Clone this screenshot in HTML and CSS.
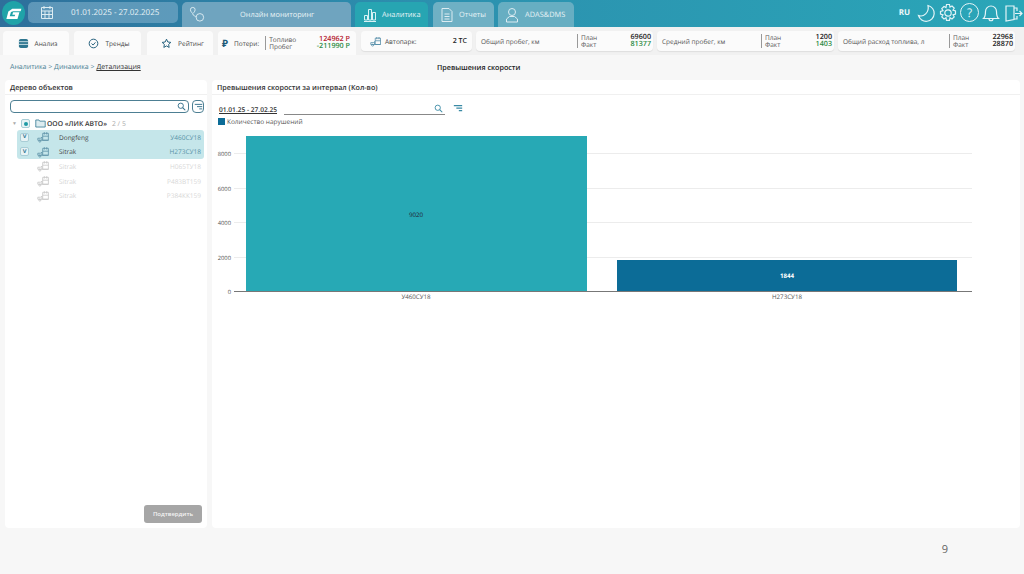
FILE: index.html
```html
<!DOCTYPE html>
<html lang="ru">
<head>
<meta charset="utf-8">
<title>Превышения скорости</title>
<link rel="stylesheet" href="styles.css">
</head>
<body>
<svg class="sprite" width="0" height="0">
  <defs>
    <symbol id="truck" viewBox="0 0 16 14"><path d="M7 2.500h7v8.500H7zM9 1v3M12 1v3M7 6h7M1 11V8.500h3.500L6 7v4M1 11h13" fill="none" stroke="currentColor" stroke-width="1"/><circle cx="3.500" cy="12" r="1.300" fill="none" stroke="currentColor"/></symbol>
  </defs>
</svg>
<header class="topbar">
  <div class="logo"><svg viewBox="0 0 24 24" width="19" height="19"><path d="M22 6H10.500L5.500 9.500 3 19h14l2.500-8.500h-8l-1 3h3.600l-.6 2H7.200l1.600-5.500L11.500 9H21z" fill="#fff"/></svg></div>
  <div class="tab tab-date">
    <svg class="tab-icon" viewBox="0 0 16 16" width="16" height="16"><path d="M2.500 2.500h11v11h-11zM2.500 6h11M2.500 9.500h11M6 6v7.500M10 6v7.500M5 1v3M11 1v3" fill="none" stroke="#dcecf2" stroke-width="1"/></svg>
    <span class="tab-date-text">01.01.2025 - 27.02.2025</span>
  </div>
  <div class="tab tab-mon">
    <svg class="tab-icon" viewBox="0 0 18 18" width="17" height="17"><path d="M4 1.500a2.500 2.500 0 0 1 2.500 2.500C6.500 6 4 8 4 8S1.500 6 1.500 4A2.500 2.500 0 0 1 4 1.500zM4 8c0 3 3 2 4 4" fill="none" stroke="#dcecf2"/><circle cx="11.500" cy="12" r="4" fill="none" stroke="#dcecf2"/></svg>
    <span class="tab-mon-text">Онлайн мониторинг</span>
  </div>
  <div class="tab tab-an">
    <svg viewBox="0 0 16 16" width="16" height="16"><path d="M2 14.500h12M2.500 13V8.500h3V13zM6.500 13V2.500h3V13zM10.500 13V5.500h3V13z" fill="none" stroke="#d8f2f5"/></svg>
    <span>Аналитика</span>
  </div>
  <div class="tab tab-rep">
    <svg viewBox="0 0 16 16" width="16" height="16"><path d="M3 1.500h7l3 3v10H3zM5.500 7h5M5.500 9.500h5M5.500 12h5" fill="none" stroke="#dcecf2"/></svg>
    <span>Отчеты</span>
  </div>
  <div class="tab tab-ad">
    <svg viewBox="0 0 16 16" width="16" height="16"><circle cx="8" cy="5" r="3.500" fill="none" stroke="#dcecf2"/><path d="M2.500 15v-3l3-2.500h5l3 2.500v3z" fill="none" stroke="#dcecf2"/></svg>
    <span>ADAS&amp;DMS</span>
  </div>
  <div class="top-right">
    <span class="lang">RU</span>
    <svg viewBox="0 0 20 20" width="20" height="20"><path d="M12 2.500a8 8 0 1 1-9.500 10c5 2 11-3 9.500-10z" fill="none" stroke="#e4f4f7" stroke-width="1.200"/></svg>
    <svg viewBox="0 0 20 20" width="20" height="20"><circle cx="10" cy="10" r="3.200" fill="none" stroke="#e4f4f7" stroke-width="1.200"/><path d="M8.500 1.500h3l.5 2.500 2-1 2.200 2.200-1.200 2 2.500.7v3.200l-2.500.7 1.200 2-2.200 2.200-2-1.200-.5 2.500h-3l-.5-2.500-2 1.200-2.200-2.200 1.200-2-2.500-.7V8.400l2.500-.7-1.200-2L6 3.500l2 1z" fill="none" stroke="#e4f4f7" stroke-width="1.200"/></svg>
    <span class="help">?</span>
    <svg viewBox="0 0 20 20" width="20" height="20"><path d="M2.500 15.500c2-2 2-4 2-7a5.500 5.500 0 0 1 11 0c0 3 0 5 2 7zM8 15.500c0 3 4 3 4 0" fill="none" stroke="#e4f4f7" stroke-width="1.200"/></svg>
    <svg viewBox="0 0 20 20" width="20" height="20"><path d="M11 3H3v15l8-1.500zM11 5h3v3M14 13v3h-3M12 10.500h7M16.500 8l2.500 2.500-2.500 2.500" fill="none" stroke="#e4f4f7" stroke-width="1.200"/></svg>
  </div>
</header>

<nav class="subbar">
  <div class="sub-tab sub-a">
    <svg viewBox="0 0 12 12" width="11" height="11"><rect x="1" y="1" width="10" height="10" rx="2" fill="#2f7690"/><path d="M1 4h10M1 7h10" stroke="#cfe2e8"/></svg>
    <span>Анализ</span>
  </div>
  <div class="sub-tab sub-t">
    <svg viewBox="0 0 14 14" width="11" height="11"><circle cx="7" cy="7" r="5.500" fill="none" stroke="#1d5a78" stroke-width="1.200"/><path d="M4.500 7l2 2 3-3.500" fill="none" stroke="#1d5a78" stroke-width="1.200"/></svg>
    <span>Тренды</span>
  </div>
  <div class="sub-tab sub-r">
    <svg viewBox="0 0 14 14" width="11" height="11"><path d="M7 1.500l1.700 3.600 3.800.5-2.800 2.600.7 3.800L7 10.100 3.600 12l.7-3.800L1.500 5.600l3.800-.5z" fill="none" stroke="#1d5a78" stroke-width="1.200"/></svg>
    <span>Рейтинг</span>
  </div>
  <div class="stat stat-loss">
    <span class="ruble">₽</span>
    <span class="stat-name">Потери:</span>
    <div class="labels"><span>Топливо</span><span>Пробег</span></div>
    <div class="vals"><span class="red">124962 Р</span><span class="green">-211990 Р</span></div>
  </div>
  <div class="stat stat-park">
    <svg viewBox="0 0 16 14" width="12" height="11" class="park-icon"><use href="#truck"/></svg>
    <span class="stat-name">Автопарк:</span>
    <b class="park-val">2 ТС</b>
  </div>
  <div class="stat stat-plan plan-a">
    <span class="plan-name">Общий пробег, км</span>
    <div class="labels"><span>План</span><span>Факт</span></div>
    <div class="vals"><span>69600</span><span class="green">81377</span></div>
  </div>
  <div class="stat stat-plan plan-b">
    <span class="plan-name">Средний пробег, км</span>
    <div class="labels"><span>План</span><span>Факт</span></div>
    <div class="vals"><span>1200</span><span class="green">1403</span></div>
  </div>
  <div class="stat stat-plan plan-c">
    <span class="plan-name">Общий расход топлива, л</span>
    <div class="labels"><span>План</span><span>Факт</span></div>
    <div class="vals"><span>22968</span><span>28870</span></div>
  </div>
</nav>

<div class="crumbs">
  <div class="crumb-links">Аналитика &gt; Динамика &gt; <u>Детализация</u></div>
  <div class="crumb-title">Превышения скорости</div>
</div>

<main class="content">
  <section class="panel panel-left">
    <h2 class="panel-title">Дерево объектов</h2>
    <div class="search-row">
      <div class="search-box">
        <svg viewBox="0 0 12 12" width="9" height="9"><circle cx="5" cy="5" r="3.500" fill="none" stroke="#2b6a86" stroke-width="1.200"/><path d="M7.500 7.500L11 11" stroke="#2b6a86" stroke-width="1.400"/></svg>
      </div>
      <div class="filter-btn"><svg viewBox="0 0 12 10" width="9" height="8"><path d="M1 1.500h10M4 4.500h7M7 7.500h4" stroke="#2b6a86" stroke-width="1.200"/></svg></div>
    </div>
    <div class="tree-root">
      <span class="caret">▼</span>
      <span class="check check-dot"></span>
      <svg viewBox="0 0 14 11" width="11" height="9"><path d="M1 10V1h4l1 1.500h7V10z" fill="#dcecf0" stroke="#2f7690"/></svg>
      <b>ООО «ЛИК АВТО»</b>
      <span class="count">2 / 5</span>
    </div>
    <div class="rows">
      <div class="row row-on"><span class="check">v</span><svg class="truck" width="13" height="12"><use href="#truck"/></svg><span class="row-name">Dongfeng</span><span class="row-num">У460СУ18</span></div>
      <div class="row row-on"><span class="check">v</span><svg class="truck" width="13" height="12"><use href="#truck"/></svg><span class="row-name">Sitrak</span><span class="row-num">Н273СУ18</span></div>
      <div class="row row-off"><span class="check-empty"></span><svg class="truck" width="13" height="12"><use href="#truck"/></svg><span class="row-name">Sitrak</span><span class="row-num">Н065ТУ18</span></div>
      <div class="row row-off"><span class="check-empty"></span><svg class="truck" width="13" height="12"><use href="#truck"/></svg><span class="row-name">Sitrak</span><span class="row-num">Р483ВТ159</span></div>
      <div class="row row-off"><span class="check-empty"></span><svg class="truck" width="13" height="12"><use href="#truck"/></svg><span class="row-name">Sitrak</span><span class="row-num">Р384КК159</span></div>
    </div>
    <div class="confirm-row"><button class="confirm">Подтвердить</button></div>
  </section>

  <section class="panel panel-right">
    <h2 class="panel-title">Превышения скорости за интервал (Кол-во)</h2>
    <div class="chart-tools">
      <span class="range">01.01.25 - 27.02.25</span>
      <div class="range-search"><svg viewBox="0 0 12 12" width="9" height="9"><circle cx="5" cy="5" r="3.500" fill="none" stroke="#3a8aa5" stroke-width="1.200"/><path d="M7.500 7.500L11 11" stroke="#3a8aa5" stroke-width="1.400"/></svg></div>
      <svg class="range-filter" viewBox="0 0 12 10" width="10" height="9"><path d="M1 1.500h10M4 4.500h7M7 7.500h4" stroke="#3a8aa5" stroke-width="1.300"/></svg>
    </div>
    <div class="legend"><i></i><span>Количество нарушений</span></div>
    <svg class="chart" width="808" height="192" viewBox="212 126 808 192">
      <g stroke="#ececec">
        <line x1="234" x2="972" y1="153.500" y2="153.500"/>
        <line x1="234" x2="972" y1="188.500" y2="188.500"/>
        <line x1="234" x2="972" y1="222.500" y2="222.500"/>
        <line x1="234" x2="972" y1="257.500" y2="257.500"/>
      </g>
      <rect x="246" y="136" width="341" height="155" fill="#27a9b5"/>
      <rect x="617" y="260" width="340" height="31" fill="#0c6c97"/>
      <line x1="234" x2="972" y1="291.500" y2="291.500" stroke="#777"/>
      <g class="axis-y">
        <text x="231" y="155.500">8000</text>
        <text x="231" y="190.500">6000</text>
        <text x="231" y="224.500">4000</text>
        <text x="231" y="259.500">2000</text>
        <text x="231" y="294">0</text>
      </g>
      <g class="axis-x">
        <text x="416" y="299">У460СУ18</text>
        <text x="787" y="299">Н273СУ18</text>
      </g>
      <text class="bar-dark" x="416" y="217">9020</text>
      <text class="bar-light" x="787" y="278">1844</text>
    </svg>
  </section>
</main>

<footer class="footer"><span class="page-num">9</span></footer>
</body>
</html>
```
FILE: styles.css
```css
* { box-sizing: border-box; }
html, body { margin: 0; padding: 0; }
body {
  width: 1024px;
  height: 574px;
  overflow: hidden;
  background: #f7f7f7;
  font-family: "Open Sans", "Noto Sans", sans-serif;
  text-rendering: geometricPrecision;
  color: #333;
  font-size: 6.500px;
}
.sprite { position: absolute; }

.topbar {
  height: 27px;
  display: flex;
  align-items: flex-start;
  background: linear-gradient(90deg, #2e6f9b 0%, #2c8fae 40%, #2aa6b8 100%);
  padding-left: 2px;
  color: #e8f3f6;
  font-size: 7.400px;
}
.logo {
  width: 23px;
  height: 24px;
  margin-top: 1px;
  border-radius: 50%;
  background: #1fa3a8;
  display: flex;
  align-items: center;
  justify-content: center;
}
.tab {
  height: 25px;
  margin-top: 2px;
  border-radius: 5px 5px 0 0;
  background: rgba(170, 205, 222, 0.5);
  display: flex;
  align-items: center;
  gap: 5px;
}
.tab-date {
  width: 150px;
  height: 21px;
  margin-left: 3px;
  border-radius: 5px;
  padding-left: 11px;
  background: rgba(120, 170, 200, 0.65);
  font-size: 8px;
}
.tab-date-text { margin-left: 11px; }
.tab-mon { width: 169px; margin-left: 4px; padding-left: 7px; background: #6fa4bf; }
.tab-mon-text { margin-left: 29px; }
.tab-an { width: 73px; margin-left: 4px; padding-left: 7px; background: #27a5b2; gap: 4px; }
.tab-rep { width: 61px; margin-left: 5px; padding-left: 6px; background: #6fb0c4; gap: 4px; }
.tab-ad { width: 76px; margin-left: 4px; padding-left: 6px; background: #67aec2; gap: 5px; }
.top-right {
  margin-left: auto;
  padding-right: 1px;
  padding-top: 3px;
  height: 27px;
  display: flex;
  align-items: flex-start;
  gap: 2px;
}
.lang { font-weight: 700; font-size: 8px; margin-top: 4px; margin-right: 4px; color: #f0f8fa; }
.help {
  width: 19px;
  height: 19px;
  border: 1.200px solid #e4f4f7;
  border-radius: 50%;
  display: flex;
  align-items: center;
  justify-content: center;
  font-size: 12px;
  line-height: 1;
  color: #e4f4f7;
}

.subbar {
  height: 28px;
  display: flex;
  align-items: flex-start;
  padding: 4px 0 0 3px;
  background: #f1f1f1;
  color: #444;
}
.sub-tab {
  height: 24px;
  background: #fbfbfb;
  border-radius: 4px 4px 0 0;
  display: flex;
  align-items: center;
  justify-content: center;
  gap: 6px;
  padding-left: 3px;
}
.sub-a { width: 66px; }
.sub-t { width: 67px; margin-left: 5px; }
.sub-r { width: 66px; margin-left: 6px; padding-left: 5px; }
.stat {
  height: 20px;
  background: #fbfbfb;
  border-radius: 4px;
  display: flex;
  align-items: center;
  box-shadow: 0 1px 1px rgba(0, 0, 0, 0.08);
}
.stat-loss { width: 138px; margin-left: 5px; height: 24px; border-radius: 4px 4px 0 0; padding: 0 6px 0 4px; box-shadow: none; }
.stat-park { width: 111px; margin-left: 5px; padding: 0 5px 0 9px; }
.stat-plan { width: 177px; margin-left: 4px; padding: 0 2px 0 5px; }
.ruble { font-size: 10px; font-weight: 700; color: #1d5a78; margin-right: 6px; }
.park-icon { color: #4f8aa5; margin-right: 3px; }
.park-val { margin-left: auto; font-weight: 600; font-size: 7px; color: #222; }
.plan-name { color: #555; white-space: nowrap; }
.plan-a .plan-name { width: 96px; }
.plan-b .plan-name { width: 99px; }
.plan-c .plan-name { width: 106px; }
.labels {
  border-left: 1px solid #999;
  padding-left: 3px;
  display: flex;
  flex-direction: column;
  line-height: 7px;
  color: #555;
}
.stat-loss .labels { margin-left: 6px; }
.vals {
  margin-left: auto;
  display: flex;
  flex-direction: column;
  align-items: flex-end;
  font-size: 7.200px;
  font-weight: 600;
  line-height: 7.500px;
  color: #222;
}
.red { color: #b5202f; }
.green { color: #2e8b46; }

.crumbs {
  height: 25px;
  display: flex;
  align-items: center;
  padding: 0 0 0 10px;
  color: #4a7f95;
  font-size: 7px;
}
.crumb-links { width: 427px; white-space: nowrap; }
.crumb-links u { color: #333; }
.crumb-title {
  font-size: 7.200px;
  font-weight: 600;
  color: #222;
}

.content {
  height: 448px;
  display: flex;
  gap: 5px;
  padding: 0 4px 0 5px;
}
.panel {
  background: #fff;
  border-radius: 4px;
  display: flex;
  flex-direction: column;
}
.panel-left { width: 202px; }
.panel-right { flex: 1; }
.panel-title {
  margin: 0;
  height: 15px;
  padding: 2px 0 0 5px;
  font-size: 7.200px;
  line-height: 13px;
  font-weight: 600;
  color: #333;
  border-bottom: 1px solid #f0f0f0;
}
.search-row {
  display: flex;
  gap: 3px;
  padding: 5px 3px 0 5px;
}
.search-box {
  flex: 1;
  height: 13px;
  border: 1px solid #4d7f93;
  border-radius: 4px;
  display: flex;
  align-items: center;
  justify-content: flex-end;
  padding-right: 2px;
}
.filter-btn {
  width: 12px;
  height: 13px;
  border: 1px solid #4d7f93;
  border-radius: 4px;
  display: flex;
  align-items: center;
  justify-content: center;
}
.tree-root {
  display: flex;
  align-items: center;
  height: 15px;
  margin-top: 3px;
  padding-left: 7px;
  font-size: 6.800px;
  color: #333;
}
.tree-root b { font-weight: 600; margin-left: 1px; }
.caret { font-size: 5px; color: #aaa; width: 9px; }
.check {
  width: 9px;
  height: 9px;
  border: 1px solid #a8cdd6;
  border-radius: 2px;
  background: #e7f3f5;
  color: #1d6f8f;
  font-size: 7px;
  line-height: 6px;
  display: flex;
  align-items: center;
  justify-content: center;
  font-weight: 600;
}
.check-dot { margin-right: 5px; }
.check-dot::after {
  content: "";
  width: 4px;
  height: 4px;
  border-radius: 50%;
  background: #1f9aa5;
}
.count { margin-left: 5px; color: #aaa; }
.rows { margin: -1px 3px 0 12px; }
.row {
  height: 14.600px;
  display: flex;
  align-items: center;
  padding: 0 3px 0 3px;
}
.row-on { background: #c5e6ea; color: #444; }
.row-on:first-child { border-radius: 3px 3px 0 0; }
.row-on:nth-child(2) { border-radius: 0 0 3px 3px; }
.row-off { color: #d3d3d3; }
.check-empty { width: 9px; }
.truck { margin-left: 8px; color: #5e93a8; flex: none; }
.row-off .truck { color: #c6c6c6; }
.row-name { margin-left: 9px; }
.row-num { margin-left: auto; color: #5a93a8; }
.row-off .row-num { color: #d8d8d8; }
.confirm-row {
  margin-top: auto;
  display: flex;
  justify-content: flex-end;
  padding: 0 5px 5px 0;
}
.confirm {
  width: 58px;
  height: 18px;
  border: 0;
  border-radius: 3px;
  background: #a6a6a6;
  color: #f4f4f4;
  font: 600 6px "Open Sans", sans-serif;
  padding: 0;
}

.chart-tools {
  display: flex;
  align-items: center;
  height: 16px;
  margin-top: 5px;
  padding-left: 7px;
}
.range {
  font-size: 6.600px;
  font-weight: 600;
  color: #333;
  text-decoration: underline;
  width: 65px;
  white-space: nowrap;
  padding-top: 2px;
}
.range-search {
  width: 161px;
  height: 11px;
  border-bottom: 1px solid #888;
  margin-top: 2px;
  display: flex;
  align-items: center;
  justify-content: flex-end;
  padding-right: 2px;
}
.range-filter { margin-left: 8px; }
.legend {
  display: flex;
  align-items: center;
  gap: 2px;
  height: 10px;
  padding-left: 6px;
  color: #555;
}
.legend i { width: 7px; height: 7px; background: #0c6c97; }
.chart { display: block; }
.axis-y text { font-size: 5.800px; fill: #555; text-anchor: end; font-family: "Open Sans", sans-serif; }
.axis-x text { font-size: 6.200px; fill: #555; text-anchor: middle; font-family: "Open Sans", sans-serif; }
.bar-dark, .bar-light { font-size: 6.200px; text-anchor: middle; font-family: "Open Sans", sans-serif; }
.bar-dark { fill: #223; }
.bar-light { fill: #fff; font-weight: 700; }

.footer {
  height: 46px;
  background: #f7f7f7;
  display: flex;
  justify-content: flex-end;
  padding: 14px 76px 0 0;
}
.page-num { font-size: 11px; line-height: 15px; color: #666; }
```
